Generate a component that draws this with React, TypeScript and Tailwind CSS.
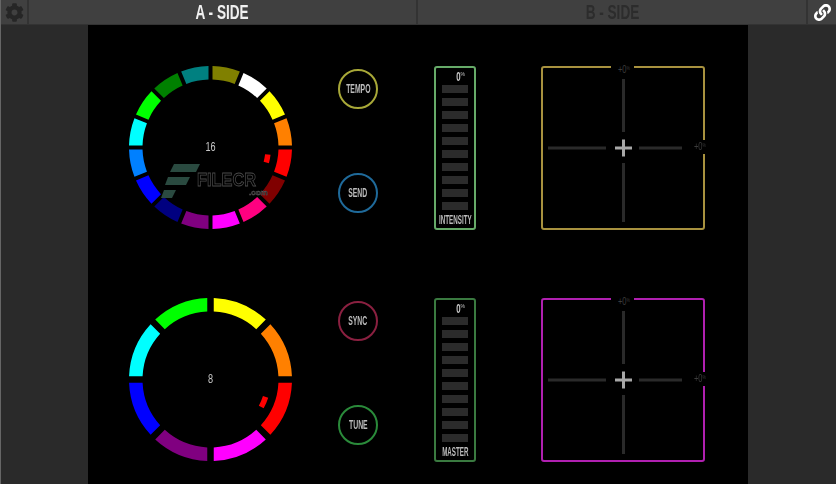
import React from "react";
import { FaCog, FaLink } from "react-icons/fa";

const FONT = "font-['Liberation_Sans',sans-serif]";

function sector(i: number, n: number, gap: number, R: number, r: number, c: number) {
  const step = (2 * Math.PI) / n;
  const a0 = i * step;
  const a1 = (i + 1) * step;
  const pt = (rad: number, a: number) => `${(c + rad * Math.sin(a)).toFixed(2)} ${(c - rad * Math.cos(a)).toFixed(2)}`;
  const dO = Math.asin(gap / 2 / R);
  const dI = Math.asin(gap / 2 / r);
  return `M${pt(R, a0 + dO)} A${R} ${R} 0 0 1 ${pt(R, a1 - dO)} L${pt(r, a1 - dI)} A${r} ${r} 0 0 0 ${pt(r, a0 + dI)} Z`;
}

function marker(angle: number, span: number, R: number, r: number, c: number) {
  const a0 = ((angle - span / 2) * Math.PI) / 180;
  const a1 = ((angle + span / 2) * Math.PI) / 180;
  const pt = (rad: number, a: number) => `${(c + rad * Math.sin(a)).toFixed(2)} ${(c - rad * Math.cos(a)).toFixed(2)}`;
  return `M${pt(R, a0)} A${R} ${R} 0 0 1 ${pt(R, a1)} L${pt(r, a1)} A${r} ${r} 0 0 0 ${pt(r, a0)} Z`;
}

function Ring({ colors, gap, label, mAngle, mSpan, watermark }: { colors: string[]; gap: number; label: string; mAngle: number; mSpan: number; watermark?: boolean }) {
  const c = 81.5;
  return (
    <div className={`relative w-[163px] h-[164px] shrink-0 ${watermark ? "blur-[0.4px]" : ""}`}>
      <svg width="163" height="164" viewBox="0 0 163 164" className="block">
        {colors.map((col, i) => (
          <path key={i} d={sector(i, colors.length, gap, 81.5, 68, c)} fill={col} />
        ))}
        <path d={marker(mAngle, mSpan, 60.5, 55, c)} fill="#ff0000" />
      </svg>
      <span className={`absolute inset-0 pb-[3px] flex items-center justify-center text-[13px] leading-none text-[#c8c8c8] scale-x-[0.7] ${FONT}`}>{label}</span>
      {watermark && (
        <>
          <svg width="42" height="36" viewBox="0 0 42 36" className="absolute left-[32px] top-[97px]">
            <polygon points="13,1 39,1 35,9 9,9" fill="#2a4a40" />
            <polygon points="7,14 29,14 25,22 4,22" fill="#2a4a40" />
            <polygon points="3,27 15,27 11,35 0,35" fill="#2a4a40" />
          </svg>
          <span className="absolute left-[68px] top-[104px] origin-left scale-x-[0.86] font-['Liberation_Sans',sans-serif] font-bold text-[19px] leading-[19px] text-transparent [-webkit-text-stroke:0.8px_#4a4a4a]">FILECR</span>
          <span className="absolute left-[120px] top-[122px] font-['Liberation_Sans',sans-serif] font-bold text-[8px] leading-[9px] text-[#1c1c1c] [-webkit-text-stroke:0.5px_#5a5a5a]">.com</span>
        </>
      )}
    </div>
  );
}

function RoundBtn({ label, border }: { label: string; border: string }) {
  return (
    <div className={`w-10 h-10 rounded-full border-2 flex items-center justify-center blur-[0.3px] ${border} ${FONT}`}>
      <span className="inline-block text-[12px] leading-none font-bold text-[#bcbcbc] scale-x-[0.57] whitespace-nowrap">{label}</span>
    </div>
  );
}

function Meter({ label, border }: { label: string; border: string }) {
  return (
    <div className={`w-[42px] h-[164px] shrink-0 rounded-[3px] border-2 flex flex-col items-center blur-[0.3px] ${border} ${FONT}`}>
      <div className="h-[17px] w-full pr-[9px] flex justify-end items-center leading-none text-[#c8c8c8]">
        <span className="inline-block text-[12px] font-bold scale-x-[0.65]">0</span>
        <span className="text-[5px] self-start mt-[4px] ml-[-1px]">%</span>
      </div>
      <div className="flex flex-col gap-[5px]">
        {Array.from({ length: 10 }).map((_, i) => (
          <div key={i} className="w-[26px] h-[8px] bg-[#2b2b2b]" />
        ))}
      </div>
      <div className="mt-[4px] w-full flex justify-center">
        <span className="inline-block text-[12px] leading-[13px] font-bold text-[#bcbcbc] scale-x-[0.52] whitespace-nowrap">{label}</span>
      </div>
    </div>
  );
}

function PadLabel() {
  return (
    <span className="inline-flex text-[#3c3c3c] scale-x-[0.75] whitespace-nowrap leading-none">
      <span className="text-[10px]">+0</span>
      <span className="text-[5px] mt-[1px]">%</span>
    </span>
  );
}

function XYPad({ border }: { border: string }) {
  return (
    <div className={`relative w-[164px] h-[164px] shrink-0 rounded-[3px] border-2 blur-[0.3px] ${border}`}>
      <svg width="160" height="160" viewBox="0 0 160 160" className="block">
        <rect x="79" y="11" width="3" height="53" fill="#2a2a2a" />
        <rect x="79" y="95" width="3" height="59" fill="#2a2a2a" />
        <rect x="5" y="78.5" width="58" height="3" fill="#2a2a2a" />
        <rect x="96" y="78.5" width="43" height="3" fill="#2a2a2a" />
        <rect x="72" y="78.5" width="17" height="3" fill="#a8a8a8" />
        <rect x="79" y="71.5" width="3" height="17" fill="#a8a8a8" />
      </svg>
      <span className={`absolute left-[68px] top-[-4px] w-[23px] h-[12px] pl-[3px] bg-black flex items-center justify-center ${FONT}`}>
        <PadLabel />
      </span>
      <span className={`absolute left-[149px] top-[72px] w-[15px] h-[14px] bg-black flex items-center justify-center ${FONT}`}>
        <PadLabel />
      </span>
    </div>
  );
}

function Row({ ring, btns, meter, pad }: { ring: React.ReactNode; btns: React.ReactNode; meter: React.ReactNode; pad: React.ReactNode }) {
  return (
    <div className="flex h-[164px] pl-[41px]">
      {ring}
      <div className="ml-[46px] w-10 pt-[3px] flex flex-col gap-[64px]">{btns}</div>
      <div className="ml-[56px]">{meter}</div>
      <div className="ml-[65px]">{pad}</div>
    </div>
  );
}

export default function App() {
  const c16 = ["#808000", "#ffffff", "#ffff00", "#ff8000", "#ff0000", "#800000", "#ff0080", "#ff00ff", "#800080", "#000080", "#0000ff", "#0080ff", "#00ffff", "#00ff00", "#008000", "#008080"];
  const c8 = ["#ffff00", "#ff8000", "#ff0000", "#ff00ff", "#800080", "#0000ff", "#00ffff", "#00ff00"];
  return (
    <div className="w-[836px] h-[484px] overflow-hidden flex flex-col bg-[#2a2a2a] border-l border-[#666]">
      <header className={`h-[25px] shrink-0 flex bg-[#404040] border-b border-[#333] ${FONT}`}>
        <div className="w-[28px] flex items-center justify-center border-r-2 border-[#333]">
          <FaCog className="text-[#262626] blur-[0.4px]" size={19} />
        </div>
        <div className="w-[389px] flex items-center justify-center border-r-2 border-[#333]">
          <span className="inline-block text-[20px] leading-none font-bold text-[#f0f0f0] scale-x-[0.68] whitespace-nowrap blur-[0.3px]">A - SIDE</span>
        </div>
        <div className="w-[390px] flex items-center justify-center border-r-2 border-[#333]">
          <span className="inline-block text-[20px] leading-none font-bold text-[#2c2c2c] scale-x-[0.68] whitespace-nowrap blur-[0.3px]">B - SIDE</span>
        </div>
        <div className="flex-1 flex items-center justify-center">
          <FaLink className="text-white blur-[0.3px]" size={17} />
        </div>
      </header>
      <div className="flex-1 flex justify-center">
        <main className="w-[660px] ml-[-1px] bg-black pt-[41px] flex flex-col gap-[68px]">
          <Row
            ring={<Ring colors={c16} gap={4} label="16" mAngle={101} mSpan={8} watermark />}
            btns={<><RoundBtn label="TEMPO" border="border-[#a8a838]" /><RoundBtn label="SEND" border="border-[#1f6a9a]" /></>}
            meter={<Meter label="INTENSITY" border="border-[#66aa68]" />}
            pad={<XYPad border="border-[#a8923f]" />}
          />
          <Row
            ring={<Ring colors={c8} gap={6.5} label="8" mAngle={113} mSpan={11} />}
            btns={<><RoundBtn label="SYNC" border="border-[#8a2040]" /><RoundBtn label="TUNE" border="border-[#2a8a3a]" /></>}
            meter={<Meter label="MASTER" border="border-[#3a7a40]" />}
            pad={<XYPad border="border-[#b020b0]" />}
          />
        </main>
      </div>
    </div>
  );
}
